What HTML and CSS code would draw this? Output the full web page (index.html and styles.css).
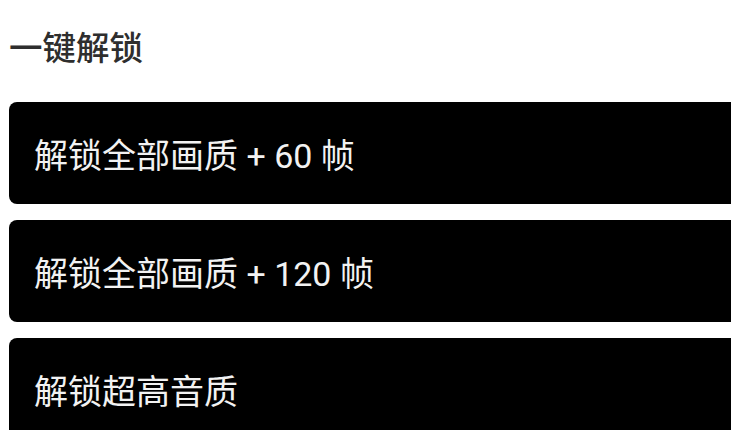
FILE: index.html
```html
<!DOCTYPE html>
<html lang="zh-CN">
<head>
<meta charset="utf-8">
<link rel="stylesheet" href="styles.css">
</head>
<body>
<div class="page">
  <h2 class="title">一键解锁</h2>
  <div class="list">
    <div class="item">解锁全部画质 + 60 帧</div>
    <div class="item">解锁全部画质 + 120 帧</div>
    <div class="item">解锁超高音质</div>
  </div>
</div>
</body>
</html>
```
FILE: styles.css
```css
html, body {
  margin: 0;
  padding: 0;
  background: #ffffff;
}
body {
  font-family: Roboto, "Noto Sans CJK SC", "Noto Sans", sans-serif;
  overflow: hidden;
}
.page {
  padding: 29px 0 0 9px;
  width: 731px;
  height: 430px;
  box-sizing: border-box;
  overflow: hidden;
}
.title {
  margin: 0 0 33px 0;
  font-size: 33.5px;
  line-height: 40px;
  font-weight: 500;
  color: #2e2e2e;
}
.list {
  display: flex;
  flex-direction: column;
  gap: 16px;
}
.item {
  width: 760px;
  height: 102px;
  box-sizing: border-box;
  background: #000000;
  border-radius: 8px;
  display: flex;
  align-items: center;
  padding-left: 25px;
  color: #f2f2f2;
  font-size: 34px;
  font-weight: 400;
}
```
